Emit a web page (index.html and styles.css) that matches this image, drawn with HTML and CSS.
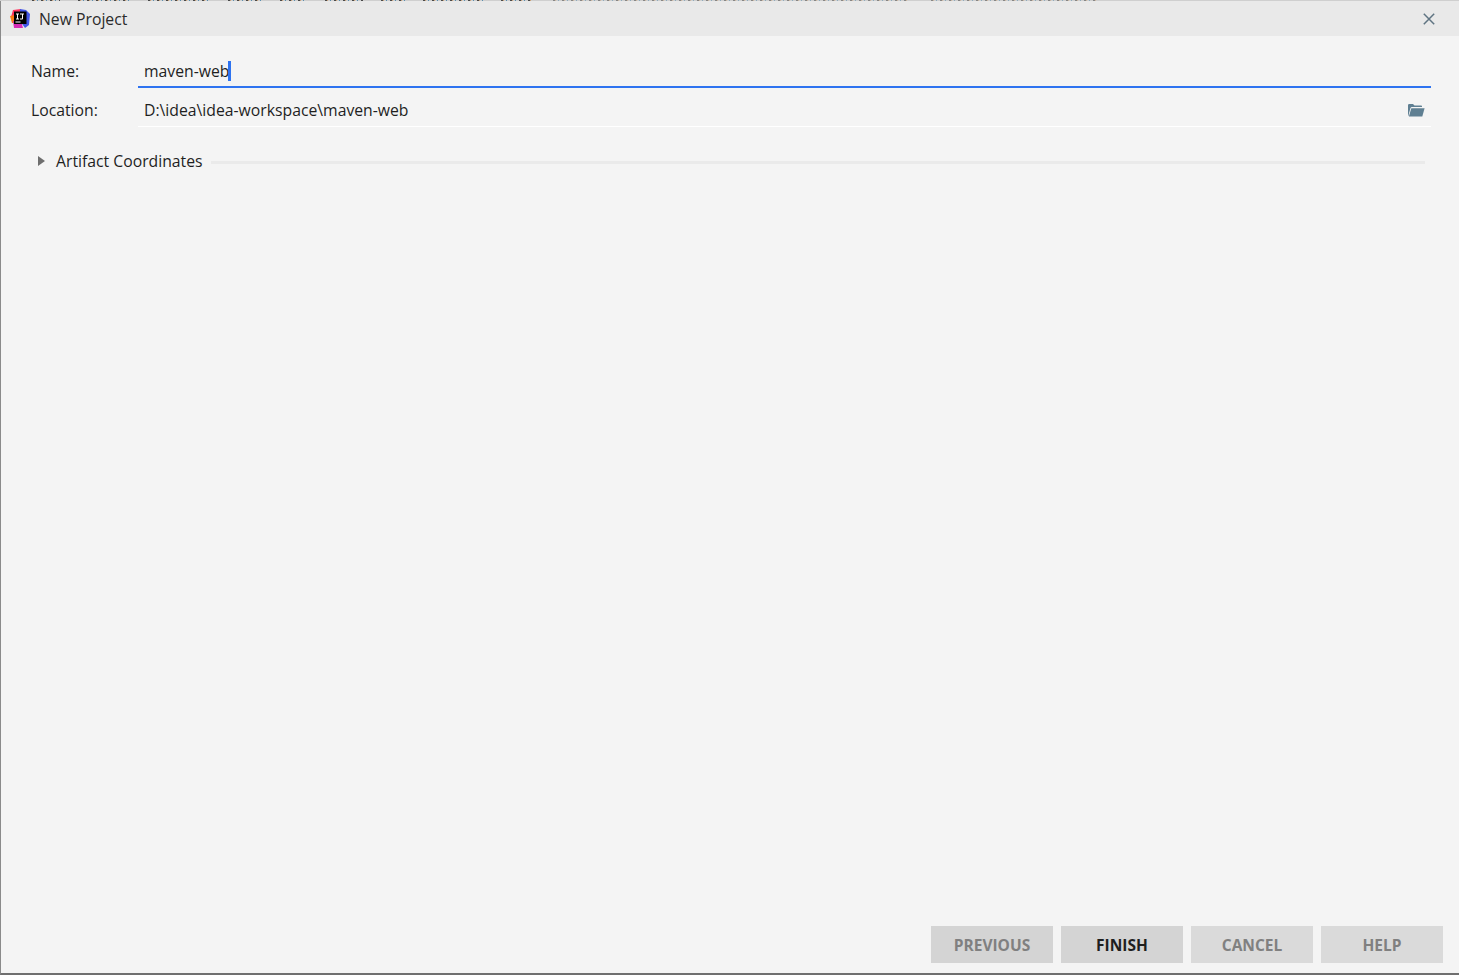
FILE: index.html
```html
<!DOCTYPE html>
<html lang="en">
<head>
<meta charset="utf-8">
<title>New Project</title>
<link rel="stylesheet" href="styles.css">
</head>
<body>
<div class="behind" aria-hidden="true"><span></span><span></span><span></span><span></span><span></span><span></span><span></span><span></span><span></span><span></span><span></span></div>
<div class="dialog">
  <header class="titlebar">
    <svg class="logo" width="20" height="20" viewBox="0 0 20 20">
      <path d="M3 1 L11 0 L11 7 L1 8 Z" fill="#fe315d"/>
      <path d="M0 7 L5 6 L5 14 L2 14 Z" fill="#f97a12"/>
      <path d="M10 0 L16 1 L20 5 L19 16 L15 19 L10 12 Z" fill="#4357e6"/>
      <path d="M3 12 L11 12 L13 19 L4 19 Z" fill="#d52bb5"/>
      <rect x="4" y="2.500" width="12.500" height="12.500" fill="#000"/>
      <rect x="5.500" y="12.500" width="5" height="1" fill="#fff"/>
      <path d="M6 4.500h3v1h-1v4h1v1H6v-1h1v-4H6zM10 4.500h4v1h-1v4q0 1-1 1h-2v-1h2v-4h-2z" fill="#fff"/>
    </svg>
    <span class="title">New Project</span>
    <svg class="close" width="12" height="12" viewBox="0 0 12 12"><path d="M.8.8 11.200 11.200M11.200.8.8 11.200" stroke="#5f7482" stroke-width="1.500" fill="none"/></svg>
  </header>
  <main class="content">
    <div class="row name-row">
      <label class="label">Name:</label>
      <div class="field active"><span class="value">maven-web</span><span class="caret"></span></div>
    </div>
    <div class="row location-row">
      <label class="label">Location:</label>
      <div class="field"><span class="value">D:\idea\idea-workspace\maven-web</span>
        <svg class="folder" width="18" height="14" viewBox="0 0 18 14"><path d="M1 13V2.200Q1 1 2.200 1H6l1.500 1.500h6.700Q15 2.500 15 3.500V4H5Q3.800 4 3.400 5.200L1.300 13Z" fill="#5f7f92"/><path d="M4.300 5.200H17.600L15.300 13.600H1.900Z" fill="#5f7f92"/></svg>
      </div>
    </div>
    <div class="artifact">
      <svg class="arrow" width="7" height="10" viewBox="0 0 7 10"><path d="M0 0 7 5 0 10Z" fill="#6e6e6e"/></svg>
      <span class="artifact-label">Artifact Coordinates</span>
      <span class="rule"></span>
    </div>
  </main>
  <footer class="actions">
    <button class="btn dim">PREVIOUS</button>
    <button class="btn primary">FINISH</button>
    <button class="btn muted">CANCEL</button>
    <button class="btn muted">HELP</button>
  </footer>
</div>
</body>
</html>
```
FILE: styles.css
```css
* { box-sizing: border-box; }
html, body { margin: 0; height: 100%; overflow: hidden; }
body {
  display: flex;
  flex-direction: column;
  height: 975px;
  font-family: "Open Sans", "Noto Sans", sans-serif;
  font-size: 15.75px;
  color: #1f1f1f;
  background: #d4d4d4;
}
.behind { height: 1px; overflow: hidden; background: #cfcfcf; flex: none; display: flex; padding-left: 32px; }
.behind span {
  flex: none;
  margin-right: 18px;
  background: repeating-linear-gradient(90deg, #4a4a4a 0 2px, #c9a27a 2px 3px, #cfcfcf 3px 5px, #5a8fb0 5px 6px, #cfcfcf 6px 9px);
}
.behind span:nth-child(1) { width: 28px; }
.behind span:nth-child(2) { width: 52px; }
.behind span:nth-child(3) { width: 62px; }
.behind span:nth-child(4) { width: 34px; }
.behind span:nth-child(5) { width: 27px; }
.behind span:nth-child(6) { width: 38px; }
.behind span:nth-child(7) { width: 24px; }
.behind span:nth-child(8) { width: 60px; }
.behind span:nth-child(9) { width: 32px; margin-right: 20px; }
.behind span:nth-child(10) { width: 355px; margin-right: 23px; opacity: .55; }
.behind span:nth-child(11) { width: 167px; opacity: .55; }
.dialog {
  flex: 1;
  display: flex;
  flex-direction: column;
  background: #f4f4f4;
  border-left: 1px solid #8a8a8a;
  border-bottom: 2px solid #6f6f6f;
  min-height: 0;
}
.titlebar {
  height: 35px;
  flex: none;
  display: flex;
  align-items: center;
  padding: 0 24px 0 9px;
  background: #e9e9e9;
}
.logo { flex: none; margin-right: 9px; }
.title { flex: 1; color: #2b2b2b; }
.close { flex: none; }
.content { flex: 1; padding: 16px 28px 0 30px; }
.row { display: flex; align-items: stretch; }
.label { width: 107px; flex: none; display: flex; align-items: center; }
.name-row { height: 36px; }
.location-row { height: 39px; }
.name-row .label { padding-top: 2px; }
.location-row .label { padding-top: 5px; }
.field {
  flex: 1;
  display: flex;
  align-items: center;
  padding: 5px 0 0 6px;
  border-bottom: 1px solid #fff;
}
.field.active { border-bottom: 2px solid #2e73f0; padding-top: 3px; }
.caret { width: 3px; height: 20px; background: #2e73f0; margin-left: -1px; }
.folder { margin-left: auto; margin-right: 6px; }
.artifact { display: flex; align-items: center; height: 22px; margin-top: 23px; padding-left: 7px; padding-right: 6px; }
.arrow { flex: none; margin-right: 11px; }
.artifact-label { flex: none; margin-right: 8px; }
.rule { flex: 1; height: 3px; background: #eaeaea; margin-top: 3px; }
.actions {
  flex: none;
  display: flex;
  justify-content: flex-end;
  gap: 8px;
  padding: 0 16px 10px 0;
}
.btn {
  width: 122px;
  height: 37px;
  border: none;
  padding: 0;
  font-family: inherit;
  font-size: 15.5px;
  font-weight: 700;
  background: #dadada;
  color: #808080;
}
.btn.dim { background: #d4d4d4; }
.btn.primary { background: #d4d4d4; color: #1f1f1f; }
```
